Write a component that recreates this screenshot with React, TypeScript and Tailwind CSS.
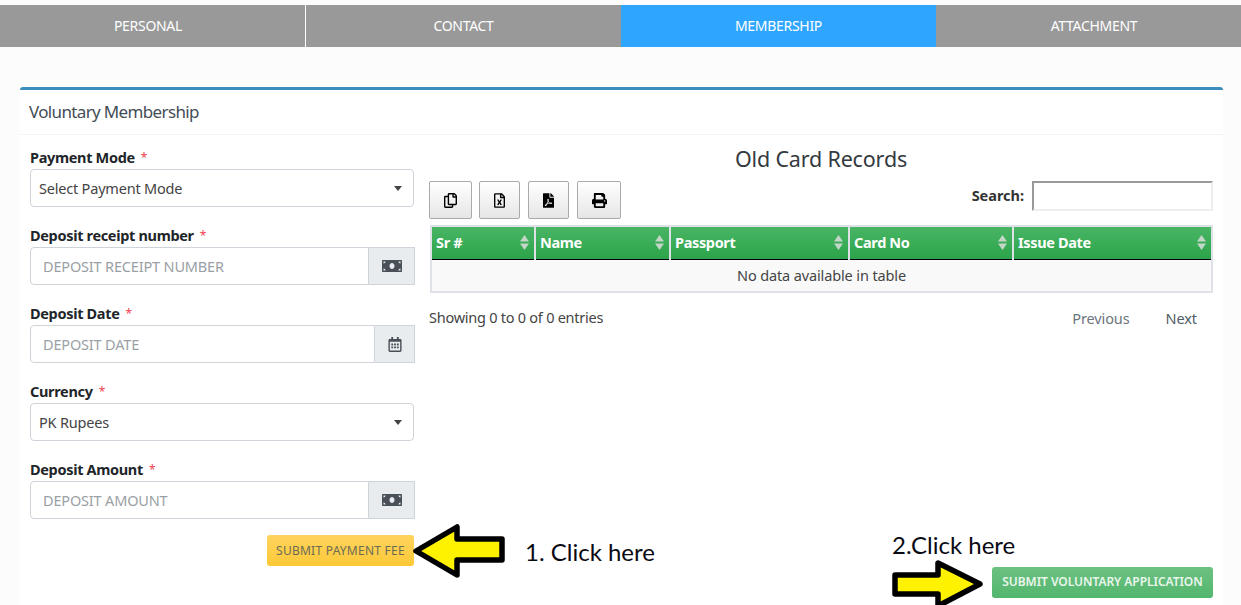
import { FaMoneyBill, FaRegCalendarAlt, FaRegCopy, FaRegFileExcel, FaFilePdf, FaPrint } from 'react-icons/fa';

const font = "font-['Noto_Sans','Open_Sans',sans-serif]";

function Label({ text }: { text: string }) {
  return (
    <div className="h-[21px] pb-[2px] flex items-center text-[14.5px] font-bold text-[#212529] tracking-[-0.33px] leading-none">
      {text}
      <span className="text-[#f0424f] font-normal text-[12px] ml-[6px]">*</span>
    </div>
  );
}

function SelectBox({ text }: { text: string }) {
  return (
    <div className="h-[38px] w-[384px] border border-[#ced4da] rounded-[4px] flex items-center justify-between pl-[8px] pr-[11px] pt-[1px] text-[14.5px] text-[#444] tracking-[-0.2px]">
      {text}
      <span className="w-0 h-0 border-x-[4px] border-x-transparent border-t-[5px] border-t-[#444]" />
    </div>
  );
}

function InputBox({ text, date }: { text: string; date?: boolean }) {
  return (
    <div className="h-[38px] w-[385px] flex">
      <div className="flex-1 border border-[#ced4da] rounded-l-[4px] flex items-center pl-[12px] pt-[1px] text-[14.5px] text-[#9a9fa5] tracking-[-0.17px]">
        {text}
      </div>
      <div className={`${date ? 'w-[40px]' : 'w-[46px]'} border border-l-0 border-[#ced4da] bg-[#e9ecef] flex items-center justify-center text-[#495057]`}>
        {date ? <FaRegCalendarAlt className="w-[14px] h-[15px]" /> : <FaMoneyBill className="w-[20px] h-[16px]" />}
      </div>
    </div>
  );
}

function SortArrows() {
  return (
    <svg width="9" height="15" viewBox="0 0 9 15" className="shrink-0">
      <path d="M4.5 0 9 6.5H0z" fill="#c3d6c8" />
      <path d="M4.5 15 0 8.5h9z" fill="#c3d6c8" />
    </svg>
  );
}

function ToolBtn({ width, children }: { width: string; children: React.ReactNode }) {
  return (
    <div className={`${width} h-[38px] border border-[#aaa] rounded-[2px] bg-gradient-to-b from-white to-[#e6e6e6] flex items-center justify-center text-black`}>
      {children}
    </div>
  );
}

const columns = [
  { name: 'Sr #', width: 'w-[104px]' },
  { name: 'Name', width: 'w-[135px]' },
  { name: 'Passport', width: 'w-[179px]' },
  { name: 'Card No', width: 'w-[164px]' },
  { name: 'Issue Date', width: 'w-[199px]' },
];

function LeftArrow() {
  return (
    <svg width="92" height="54" viewBox="0 0 92 54" className="absolute left-[413px] top-[524px]">
      <path d="M3 27 44 3v12h45v21H44v15z" fill="#fff200" stroke="#000" strokeWidth="5.5" strokeLinejoin="round" />
    </svg>
  );
}

function RightArrow() {
  return (
    <svg width="92" height="46" viewBox="0 0 92 46" className="absolute left-[892px] top-[559px]">
      <path d="M88 25 46 4v12H3v19h43v12z" fill="#fff200" stroke="#000" strokeWidth="5.5" strokeLinejoin="round" />
    </svg>
  );
}

export default function App() {
  return (
    <div className={`${font} relative w-[1241px] h-[605px] overflow-hidden bg-[#fcfcfc] pt-[5px]`}>
      <div className="flex h-[42px] text-white text-[14px] tracking-[-0.3px]">
        <div className="w-[305px] bg-[#999] flex items-center justify-center pr-[9px] pb-[1px]">PERSONAL</div>
        <div className="w-[316px] bg-[#999] border-l border-white flex items-center justify-center pb-[1px]">CONTACT</div>
        <div className="w-[315px] bg-[#2ea6ff] flex items-center justify-center pb-[1px]">MEMBERSHIP</div>
        <div className="flex-1 bg-[#999] flex items-center justify-center pl-[11px] pb-[1px]">ATTACHMENT</div>
      </div>

      <div className="ml-[20px] w-[1203px] pt-[40px]">
        <div className="h-[518px] bg-white">
          <div className="h-[3px] bg-[#3c8dbc] rounded-t-[3px]" />
          <div className="h-[45px] border-b border-[#f3f3f3] flex items-center pl-[9px] text-[17px] text-[#444d56] tracking-[-0.65px]">
            Voluntary Membership
          </div>

          <div className="flex pl-[10px] pt-[13px]">
            <div className="w-[399px] flex flex-col">
              <Label text="Payment Mode" />
              <SelectBox text="Select Payment Mode" />
              <div className="mt-[19px]"><Label text="Deposit receipt number" /></div>
              <InputBox text="DEPOSIT RECEIPT NUMBER" />
              <div className="mt-[19px]"><Label text="Deposit Date" /></div>
              <InputBox text="DEPOSIT DATE" date />
              <div className="mt-[19px]"><Label text="Currency" /></div>
              <SelectBox text="PK Rupees" />
              <div className="mt-[19px]"><Label text="Deposit Amount" /></div>
              <InputBox text="DEPOSIT AMOUNT" />
              <div className="w-[384px] flex justify-end mt-[16px]">
                <div className="w-[147px] h-[31px] rounded-[3px] bg-gradient-to-b from-[#ffd35c] to-[#fdc935] text-[#6b6b55] text-[12px] flex items-center justify-center tracking-[0.25px]">
                  SUBMIT PAYMENT FEE
                </div>
              </div>
            </div>

            <div className="w-[784px] flex flex-col">
              <div className="h-[33px] text-center text-[21.5px] text-[#343a40] leading-[22px] tracking-[-0.17px]">Old Card Records</div>
              <div className="flex justify-between items-start h-[38px]">
                <div className="flex gap-[8px]">
                  <ToolBtn width="w-[43px]"><FaRegCopy className="w-[13px] h-[15px]" /></ToolBtn>
                  <div className="ml-[-1px]"><ToolBtn width="w-[41px]"><FaRegFileExcel className="w-[11px] h-[15px]" /></ToolBtn></div>
                  <ToolBtn width="w-[41px]"><FaFilePdf className="w-[11px] h-[15px]" /></ToolBtn>
                  <ToolBtn width="w-[44px]"><FaPrint className="w-[15px] h-[15px]" /></ToolBtn>
                </div>
                <div className="flex items-center gap-[8px] text-[14.5px] font-bold text-[#333] tracking-[-0.02px]">
                  Search:
                  <div className="w-[181px] h-[30px] border-2 border-t-[#999] border-l-[#999] border-r-[#eee] border-b-[#eee]" />
                </div>
              </div>

              <table className="ml-[1px] mt-[6px] w-[783px] table-fixed border-2 border-[#dee2e6]">
                <thead>
                  <tr className="h-[33px]">
                    {columns.map((c, i) => (
                      <th key={c.name} className={`${c.width} ${i > 0 ? 'border-l-2 border-l-[#dee2e6]' : ''} p-0 border-b border-b-black bg-gradient-to-b from-[#48b565] to-[#2ca44a] text-white text-left text-[14.5px] font-bold tracking-[-0.35px]`}>
                        <div className="flex items-center justify-between pl-[4px] pr-[5px]">
                          {c.name}
                          <SortArrows />
                        </div>
                      </th>
                    ))}
                  </tr>
                </thead>
                <tbody>
                  <tr className="h-[33px]">
                    <td colSpan={5} className="p-0 pt-[1px] bg-[#f9f9f9] text-center text-[14.5px] text-[#444] tracking-[-0.13px]">No data available in table</td>
                  </tr>
                </tbody>
              </table>

              <div className="flex justify-between items-center mt-[13px] text-[14.5px] tracking-[-0.25px]">
                <div className="text-[#444]">Showing 0 to 0 of 0 entries</div>
                <div className="flex gap-[36px] pr-[16px] pt-[2px] tracking-[-0.1px]">
                  <span className="text-[#6c757d]">Previous</span>
                  <span className="text-[#4f5b66]">Next</span>
                </div>
              </div>

              <div className="flex justify-end mt-[237px]">
                <div className="w-[221px] h-[31px] rounded-[3px] bg-gradient-to-b from-[#6cc180] to-[#52b66e] text-[#e9f6ec] text-[12px] font-semibold tracking-[-0.05px] flex items-center justify-center">
                  SUBMIT VOLUNTARY APPLICATION
                </div>
              </div>
            </div>
          </div>
        </div>
      </div>

      <LeftArrow />
      <RightArrow />
      <div className="absolute left-[525px] top-[536px] text-[24px] leading-[32px] text-[#0a0a14] font-['Lato',sans-serif]">1. Click here</div>
      <div className="absolute left-[892px] top-[529px] text-[24px] leading-[32px] text-[#0a0a14] font-['Lato',sans-serif]">2.Click here</div>
    </div>
  );
}
